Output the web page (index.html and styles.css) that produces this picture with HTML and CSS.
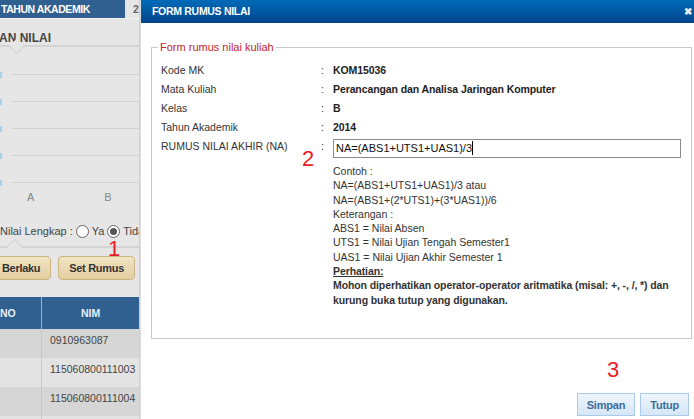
FILE: index.html
```html
<!DOCTYPE html>
<html lang="en">
<head>
  <meta charset="UTF-8">
  <title>Form Rumus Nilai</title>
  <link rel="stylesheet" href="styles.css">
</head>
<body>

<div class="screen">
  <!-- page behind the dialog -->
  <div class="page">
    <div class="topbar">
      <div class="tab active">TAHUN AKADEMIK</div>
      <div class="tab">2</div>
    </div>

    <div class="sec-title">AN NILAI</div>

    <div class="chart">
      <div class="grid-row"><span class="tick"></span><span class="line"></span></div>
      <div class="grid-row"><span class="tick"></span><span class="line"></span></div>
      <div class="grid-row"><span class="tick"></span><span class="line"></span></div>
      <div class="grid-row"><span class="tick"></span><span class="line"></span></div>
      <div class="grid-row"><span class="tick"></span><span class="line"></span></div>
      <div class="axis"><span>A</span><span>B</span></div>
    </div>

    <div class="radio-row">
      Nilai Lengkap : <span class="radio"></span> Ya <span class="radio checked"></span> Tidak
    </div>

    <div class="btn-row">
      <button class="btn-tan">Nilai Berlaku</button>
      <button class="btn-tan">Set Rumus</button>
    </div>

    <table class="grid">
      <tr><th class="col-no">NO</th><th>NIM</th></tr>
      <tr><td class="col-no"></td><td>0910963087</td></tr>
      <tr><td class="col-no"></td><td>115060800111003</td></tr>
      <tr><td class="col-no"></td><td>115060800111004</td></tr>
      <tr><td class="col-no"></td><td></td></tr>
    </table>
  </div>

  <!-- dialog -->
  <div class="dialog">
    <div class="dlg-head">
      <span>FORM RUMUS NILAI</span>
      <span class="dlg-close">&#10006;</span>
    </div>

    <div class="dlg-body">
      <fieldset>
        <legend>Form rumus nilai kuliah</legend>
        <div class="form-grid">
          <div>Kode MK</div><div>:</div><div class="val">KOM15036</div>
          <div>Mata Kuliah</div><div>:</div><div class="val">Perancangan dan Analisa Jaringan Komputer</div>
          <div>Kelas</div><div>:</div><div class="val">B</div>
          <div>Tahun Akademik</div><div>:</div><div class="val">2014</div>
          <div class="lbl-top">RUMUS NILAI AKHIR (NA)</div><div class="lbl-top">:</div>
          <div>
            <div class="formula">NA=(ABS1+UTS1+UAS1)/3<span class="caret"></span></div>
            <div class="help">
              Contoh :<br>
              NA=(ABS1+UTS1+UAS1)/3 atau<br>
              NA=(ABS1+(2*UTS1)+(3*UAS1))/6<br>
              Keterangan :<br>
              ABS1 = Nilai Absen<br>
              UTS1 = Nilai Ujian Tengah Semester1<br>
              UAS1 = Nilai Ujian Akhir Semester 1<br>
              <b><u>Perhatian:</u></b><br>
              <b>Mohon diperhatikan operator-operator aritmatika (misal: +, -, /, *) dan kurung buka tutup yang digunakan.</b>
            </div>
          </div>
        </div>
      </fieldset>
    </div>

    <div class="dlg-foot">
      <button class="btn-blue">Simpan</button>
      <button class="btn-blue">Tutup</button>
    </div>
  </div>

  <!-- step markers -->
  <span class="mark mark-1">1</span>
  <span class="mark mark-2">2</span>
  <span class="mark mark-3">3</span>
</div>

</body>
</html>
```

FILE: styles.css
```css
/* Basic reset */
body {
  margin: 0;
  font-family: "Liberation Sans", Arial, sans-serif;
  font-size: 10.5px;
  color: #333;
  overflow: hidden;
}
.screen {
  position: relative;
  display: flex;
  width: 694px;
  height: 419px;
  overflow: hidden;
}

/* page behind */
.page {
  width: 139px;
  flex-shrink: 0;
  background: #e6e6e6;
  border-right: 1px solid #cfcfcf;
  overflow: hidden;
}
.topbar {
  display: flex;
  height: 18px;
  border-bottom: 1px solid #f2f2f2;
}
.tab {
  line-height: 18px;
  font-weight: bold;
  color: #666;
  padding-left: 8px;
}
.tab.active {
  width: 124px;
  padding-left: 1px;
  background: #30608f;
  color: #fff;
  letter-spacing: -0.45px;
}
.sec-title {
  position: relative;
  padding: 12px 0 0 0;
  margin-left: -1px;
  line-height: 14px;
  font-size: 12px;
  font-weight: bold;
  color: #444;
  border-bottom: 2px solid #d3d3d3;
}
.sec-title::after,
.btn-row::before {
  content: "";
  position: absolute;
  left: 12px;
  bottom: -7px;
  width: 10px;
  height: 10px;
  background: #e6e6e6;
  border-right: 1px solid #d3d3d3;
  border-bottom: 1px solid #d3d3d3;
  transform: rotate(45deg);
}
.chart {
  margin-top: 1px;
}
.grid-row {
  display: flex;
  align-items: flex-end;
  height: 27px;
}
.tick {
  width: 2px;
  height: 6px;
  margin-bottom: -3px;
  background: #a9d1ec;
}
.line {
  flex: 1;
  border-bottom: 1px solid #d0d0d0;
  margin-left: 10px;
}
.axis {
  display: flex;
  height: 28px;
  align-items: center;
  color: #888;
  font-size: 11px;
}
.axis span:first-child {
  margin-left: 27px;
}
.axis span:last-child {
  margin-left: 70px;
}
.radio-row {
  white-space: nowrap;
  line-height: 18px;
  margin-top: 11px;
  font-size: 11px;
  color: #444;
}
.radio {
  display: inline-block;
  width: 11px;
  height: 11px;
  border: 1px solid #666;
  border-radius: 50%;
  background: #fff;
  vertical-align: -3px;
  position: relative;
}
.radio.checked::after {
  content: "";
  position: absolute;
  left: 2px;
  top: 2px;
  width: 7px;
  height: 7px;
  border-radius: 50%;
  background: #555;
}
.btn-row {
  position: relative;
  display: flex;
  justify-content: flex-end;
  gap: 7px;
  padding: 8px 4px 17px 0;
  border-top: 2px solid #d3d3d3;
  margin-top: 6px;
}
.btn-row::before {
  top: -7px;
  bottom: auto;
  left: 9px;
  transform: rotate(225deg);
}
.btn-tan {
  flex-shrink: 0;
  height: 24px;
  padding: 0 10px;
  font-family: inherit;
  font-size: 11px;
  font-weight: bold;
  letter-spacing: -0.3px;
  color: #333;
  background: linear-gradient(#f1e3c2, #e3cfa2);
  border: 1px solid #cdb583;
  border-radius: 4px;
  white-space: nowrap;
}
.grid {
  border-collapse: collapse;
  width: 140px;
}
.grid th {
  height: 30px;
  background: #30608f;
  color: #eaf1f8;
  font-weight: bold;
  border-right: 1px solid #9bb3cc;
}
.grid th.col-no {
  text-align: left;
  padding-left: 0;
}
.grid td {
  height: 29px;
  vertical-align: top;
  padding: 5px 0 0 8px;
  color: #444;
  background: #d6d6d6;
  border-right: 1px solid #c8c8c8;
  white-space: nowrap;
  box-sizing: border-box;
}
.grid tr:nth-child(odd) td {
  background: #e3e3e3;
}
.col-no {
  width: 40px;
}

/* dialog */
.dialog {
  flex: 1;
  display: flex;
  flex-direction: column;
  background: #fff;
  border-left: 1px solid #e0e0e0;
}
.dlg-head {
  display: flex;
  justify-content: space-between;
  height: 23px;
  line-height: 23px;
  padding: 0 2px 0 11px;
  background: linear-gradient(#006bb8, #00448b);
  color: #fff;
  font-weight: bold;
  letter-spacing: -0.3px;
}
.dlg-close {
  font-size: 10px;
  color: #e8eef5;
}
.dlg-body {
  padding: 18px 2px 0 10px;
}
fieldset {
  margin: 0;
  padding: 6px 0 31px 9px;
  border: 1px solid #c9c9c9;
}
legend {
  margin-left: -3px;
  padding: 0 2px;
  font-size: 11px;
  color: #c4262c;
  line-height: 13px;
}
.form-grid {
  display: grid;
  grid-template-columns: 160px 12px 1fr;
  grid-auto-rows: minmax(19px, auto);
  align-items: center;
}
.form-grid .val {
  font-weight: bold;
  letter-spacing: -0.1px;
  color: #222;
}
.form-grid .lbl-top {
  align-self: start;
  padding-top: 4px;
}
.formula {
  width: 344px;
  height: 17px;
  margin-top: 3px;
  border: 1px solid #8a8a8a;
  font-size: 11px;
  line-height: 17px;
  padding-left: 2px;
  color: #111;
}
.caret {
  display: inline-block;
  width: 1px;
  height: 14px;
  background: #000;
  vertical-align: -3px;
}
.help {
  margin-top: 6px;
  line-height: 14.3px;
  color: #333;
}
.help b {
  letter-spacing: -0.1px;
}
.dlg-foot {
  margin-top: auto;
  display: flex;
  justify-content: flex-end;
  gap: 5px;
  padding: 0 5px 3px 0;
}
.btn-blue {
  height: 23px;
  padding: 0 9px;
  font-family: inherit;
  font-size: 11px;
  font-weight: bold;
  letter-spacing: -0.2px;
  color: #3d6c9c;
  background: linear-gradient(#eef5fc, #d4e6f7);
  border: 1px solid #a9cbe9;
}

/* red step markers */
.mark {
  position: absolute;
  font-size: 22px;
  line-height: 22px;
  color: #ea1c24;
}
.mark-1 { left: 108px; top: 238px; }
.mark-2 { left: 302px; top: 148px; }
.mark-3 { left: 607px; top: 359px; }
```
